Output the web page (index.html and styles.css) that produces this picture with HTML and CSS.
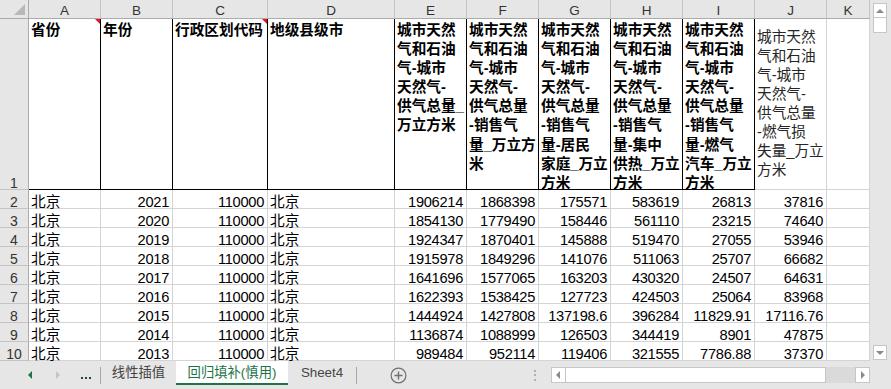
FILE: index.html
```html
<!DOCTYPE html>
<html lang="zh-CN">
<head>
  <meta charset="UTF-8">
  <meta name="viewport" content="width=device-width, initial-scale=1.0">
  <title>回归填补(慎用)</title>
  <link rel="stylesheet" href="styles.css">
</head>
<body>
  <div class="book">
    <div class="pane">
      <div class="sheet">
        <div class="corner"></div>
        <div class="ch">A</div>
        <div class="ch">B</div>
        <div class="ch">C</div>
        <div class="ch">D</div>
        <div class="ch">E</div>
        <div class="ch">F</div>
        <div class="ch">G</div>
        <div class="ch">H</div>
        <div class="ch">I</div>
        <div class="ch">J</div>
        <div class="ch">K</div>

        <div class="rh">1</div>
        <div class="c h note">省份</div>
        <div class="c h">年份</div>
        <div class="c h note">行政区划代码</div>
        <div class="c h">地级县级市</div>
        <div class="c h">城市天然<br>气和石油<br>气-城市<br>天然气-<br>供气总量_<br>万立方米</div>
        <div class="c h">城市天然<br>气和石油<br>气-城市<br>天然气-<br>供气总量<br>-销售气<br>量_万立方<br>米</div>
        <div class="c h">城市天然<br>气和石油<br>气-城市<br>天然气-<br>供气总量<br>-销售气<br>量-居民<br>家庭_万立<br>方米</div>
        <div class="c h">城市天然<br>气和石油<br>气-城市<br>天然气-<br>供气总量<br>-销售气<br>量-集中<br>供热_万立<br>方米</div>
        <div class="c h">城市天然<br>气和石油<br>气-城市<br>天然气-<br>供气总量<br>-销售气<br>量-燃气<br>汽车_万立<br>方米</div>
        <div class="c hj"><span>城市天然<br>气和石油<br>气-城市<br>天然气-<br>供气总量<br>-燃气损<br>失量_万立<br>方米</span></div>
        <div class="c"></div>

        <div class="rh">2</div>
        <div class="c">北京</div><div class="c n">2021</div><div class="c n">110000</div><div class="c">北京</div>
        <div class="c n">1906214</div><div class="c n">1868398</div><div class="c n">175571</div><div class="c n">583619</div><div class="c n">26813</div><div class="c n">37816</div><div class="c"></div>

        <div class="rh">3</div>
        <div class="c">北京</div><div class="c n">2020</div><div class="c n">110000</div><div class="c">北京</div>
        <div class="c n">1854130</div><div class="c n">1779490</div><div class="c n">158446</div><div class="c n">561110</div><div class="c n">23215</div><div class="c n">74640</div><div class="c"></div>

        <div class="rh">4</div>
        <div class="c">北京</div><div class="c n">2019</div><div class="c n">110000</div><div class="c">北京</div>
        <div class="c n">1924347</div><div class="c n">1870401</div><div class="c n">145888</div><div class="c n">519470</div><div class="c n">27055</div><div class="c n">53946</div><div class="c"></div>

        <div class="rh">5</div>
        <div class="c">北京</div><div class="c n">2018</div><div class="c n">110000</div><div class="c">北京</div>
        <div class="c n">1915978</div><div class="c n">1849296</div><div class="c n">141076</div><div class="c n">511063</div><div class="c n">25707</div><div class="c n">66682</div><div class="c"></div>

        <div class="rh">6</div>
        <div class="c">北京</div><div class="c n">2017</div><div class="c n">110000</div><div class="c">北京</div>
        <div class="c n">1641696</div><div class="c n">1577065</div><div class="c n">163203</div><div class="c n">430320</div><div class="c n">24507</div><div class="c n">64631</div><div class="c"></div>

        <div class="rh">7</div>
        <div class="c">北京</div><div class="c n">2016</div><div class="c n">110000</div><div class="c">北京</div>
        <div class="c n">1622393</div><div class="c n">1538425</div><div class="c n">127723</div><div class="c n">424503</div><div class="c n">25064</div><div class="c n">83968</div><div class="c"></div>

        <div class="rh">8</div>
        <div class="c">北京</div><div class="c n">2015</div><div class="c n">110000</div><div class="c">北京</div>
        <div class="c n">1444924</div><div class="c n">1427808</div><div class="c n">137198.6</div><div class="c n">396284</div><div class="c n">11829.91</div><div class="c n">17116.76</div><div class="c"></div>

        <div class="rh">9</div>
        <div class="c">北京</div><div class="c n">2014</div><div class="c n">110000</div><div class="c">北京</div>
        <div class="c n">1136874</div><div class="c n">1088999</div><div class="c n">126503</div><div class="c n">344419</div><div class="c n">8901</div><div class="c n">47875</div><div class="c"></div>

        <div class="rh">10</div>
        <div class="c">北京</div><div class="c n">2013</div><div class="c n">110000</div><div class="c">北京</div>
        <div class="c n">989484</div><div class="c n">952114</div><div class="c n">119406</div><div class="c n">321555</div><div class="c n">7786.88</div><div class="c n">37370</div><div class="c"></div>
      </div>

      <div class="vscroll">
        <div class="sbtn"><i class="tri-up"></i></div>
        <div class="vthumb"></div>
        <div class="vtrack"></div>
        <div class="sbtn"><i class="tri-down"></i></div>
      </div>
    </div>

    <div class="tabbar">
      <div class="nav">
        <i class="tri-left on"></i>
        <i class="tri-right"></i>
        <span class="more"><b></b><b></b><b></b></span>
      </div>
      <div class="sep"></div>
      <div class="tab t1">线性插值</div>
      <div class="tab t2 active">回归填补(慎用)</div>
      <div class="tab t3">Sheet4</div>
      <div class="sep"></div>
      <svg class="add" width="17" height="17" viewBox="0 0 17 17">
        <circle cx="8.5" cy="8.5" r="7.4" fill="none" stroke="#707070" stroke-width="1.2"/>
        <path d="M8.5 4.5v8M4.5 8.5h8" stroke="#707070" stroke-width="1.4"/>
      </svg>
      <div class="grip"><b></b><b></b><b></b></div>
      <div class="hscroll">
        <div class="sbtn"><i class="tri-left"></i></div>
        <div class="hthumb"></div>
        <div class="htrack"></div>
        <div class="sbtn"><i class="tri-right"></i></div>
      </div>
    </div>
  </div>
</body>
</html>
```

FILE: styles.css
```css
body {
  margin: 0;
  width: 891px;
  height: 389px;
  overflow: hidden;
  background: #fff;
  font-family: "Liberation Sans", "Noto Sans CJK SC", sans-serif;
  color: #000;
}
.book {
  display: flex;
  flex-direction: column;
  width: 891px;
  height: 389px;
}
.pane {
  display: flex;
  height: 361px;
}

/* grid */
.sheet {
  display: grid;
  grid-template-columns: 29px 72px 72px 95px 127px 72px 72px 72px 72px 72px 72px 43px;
  grid-template-rows: 19px 171px repeat(9, 19px);
  width: 870px;
}
.sheet > div {
  box-sizing: border-box;
  min-width: 0;
}
.corner {
  position: relative;
  background: #e6e6e6;
  border-right: 1px solid #ababab;
  border-bottom: 1px solid #ababab;
}
.corner::after {
  content: "";
  position: absolute;
  right: 3px;
  bottom: 3px;
  border-left: 11px solid transparent;
  border-bottom: 11px solid #b8b8b8;
}
.ch {
  background: #e6e6e6;
  border-right: 1px solid #c4c4c4;
  border-bottom: 1px solid #ababab;
  color: #333;
  font-size: 13.5px;
  line-height: 17px;
  padding-top: 2px;
  text-align: center;
}
.rh {
  display: flex;
  align-items: flex-end;
  justify-content: center;
  background: #e6e6e6;
  border-right: 1px solid #ababab;
  border-bottom: 1px solid #c4c4c4;
  color: #333;
  font-size: 14px;
  line-height: 12px;
}
.c {
  display: flex;
  align-items: flex-end;
  border-right: 1px solid #d4d4d4;
  border-bottom: 1px solid #d4d4d4;
  padding: 0 3px 0 2px;
  font-size: 14.67px;
  line-height: 12px;
  white-space: nowrap;
}
.n {
  justify-content: flex-end;
  letter-spacing: -0.3px;
}
.h {
  display: block;
  position: relative;
  border-color: #000;
  font-weight: 700;
  padding-top: 2px;
  line-height: 19.1px;
}
.hj {
  align-items: center;
  color: #262626;
  line-height: 19.1px;
}
.note::after {
  content: "";
  position: absolute;
  top: 0;
  right: 0;
  border-left: 5px solid transparent;
  border-top: 5px solid #e81123;
}

/* scrollbars */
.vscroll {
  display: flex;
  flex-direction: column;
  width: 21px;
  background: #e6e6e6;
  padding: 3px 4px 1px 3px;
  box-sizing: border-box;
}
.sbtn {
  display: flex;
  align-items: center;
  justify-content: center;
  box-sizing: border-box;
  width: 14px;
  height: 15px;
  background: #fff;
  border: 1px solid #c6c6c6;
}
.vthumb {
  height: 15px;
  background: #fff;
  border: 1px solid #c6c6c6;
  border-top: 0;
  box-sizing: border-box;
}
.vtrack {
  flex: 1;
}
.tri-up, .tri-down, .tri-left, .tri-right {
  display: block;
  width: 0;
  height: 0;
}
.tri-up {
  border: 4px solid transparent;
  border-top: 0;
  border-bottom: 4px solid #8a8a8a;
}
.tri-down {
  border: 4px solid transparent;
  border-bottom: 0;
  border-top: 4px solid #8a8a8a;
}
.tri-left {
  border: 4px solid transparent;
  border-left: 0;
  border-right: 4px solid #8a8a8a;
}
.tri-right {
  border: 4px solid transparent;
  border-right: 0;
  border-left: 4px solid #8a8a8a;
}

/* sheet tabs */
.tabbar {
  display: flex;
  align-items: center;
  height: 28px;
  background: #e6e6e6;
}
.nav {
  display: flex;
  align-items: center;
  width: 100px;
  padding-left: 28px;
  box-sizing: border-box;
}
.nav .tri-left {
  border-right-color: #217346;
}
.nav .tri-right {
  margin-left: 24px;
  border-left-color: #c4c4c4;
}
.more {
  display: flex;
  gap: 2px;
  margin-left: 21px;
  margin-top: 5px;
}
.more b, .grip b {
  display: block;
  width: 2px;
  height: 2px;
  background: #1e4e33;
}
.sep {
  width: 1px;
  height: 17px;
  background: #a8a8a8;
}
.tab {
  align-self: flex-start;
  box-sizing: border-box;
  height: 24px;
  padding-top: 2px;
  line-height: 20px;
  border-bottom: 2px solid transparent;
  font-size: 13.33px;
  color: #444;
  text-align: center;
  white-space: nowrap;
}
.t1 { width: 75px; }
.t2 { width: 112px; }
.t3 { width: 68px; }
.active {
  background: #fff;
  color: #217346;
  border-bottom-color: #217346;
}
.add {
  margin-left: 33px;
}
.grip {
  display: flex;
  flex-direction: column;
  gap: 2.5px;
  margin-left: 127px;
}
.grip b {
  background: #b0b0b0;
}
.hscroll {
  display: flex;
  align-items: stretch;
  margin-left: 15px;
  width: 319px;
  height: 16px;
}
.hscroll .sbtn {
  height: 16px;
  width: 15px;
}
.hthumb {
  width: 261px;
  background: #fff;
  border: 1px solid #c6c6c6;
  border-left: 0;
  box-sizing: border-box;
}
.htrack {
  width: 29px;
  background: #dadada;
}
```
